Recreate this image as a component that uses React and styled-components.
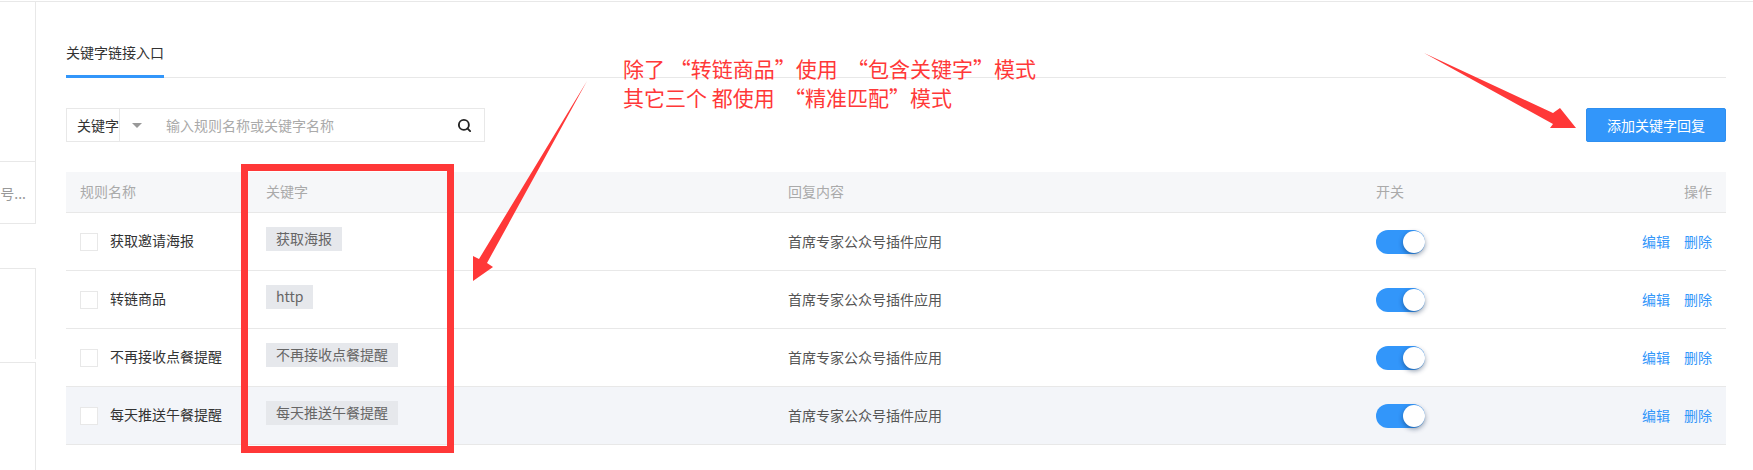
import React from "react";
import styled, { createGlobalStyle } from "styled-components";
import { Search } from "lucide-react";

const Global = createGlobalStyle`
  html, body { margin: 0; padding: 0; background: #fff; }
  body { font-family: "Noto Sans CJK SC", "Noto Sans", sans-serif; font-size: 14px; color: #333; }
  * { box-sizing: border-box; }
`;

const Page = styled.div`
  position: relative;
  width: 1753px;
  height: 470px;
  overflow: hidden;
  padding-top: 1px;
`;
const Frame = styled.div`
  display: flex;
  height: 469px;
  border-top: 1px solid #e8e8e8;
`;
const Sidebar = styled.aside`
  width: 36px;
  flex-shrink: 0;
  display: flex;
  flex-direction: column;
`;
const SideCard = styled.div`
  height: ${(p) => p.$h}px;
  margin-bottom: ${(p) => p.$gap || 0}px;
  border-right: 1px solid #e8e8e8;
  border-top: ${(p) => (p.$top ? "1px solid #e8e8e8" : "none")};
  border-bottom: ${(p) => (p.$bottom ? "1px solid #e8e8e8" : "none")};
  overflow: hidden;
  display: flex;
  align-items: center;
  justify-content: flex-end;
  padding-right: 9px;
  white-space: nowrap;
  color: #999;
  font-size: 14px;
`;
const Main = styled.main`
  flex: 1;
  min-width: 0;
  padding: 0 27px 0 30px;
`;
const TabBar = styled.div`
  display: flex;
  height: 76px;
  align-items: flex-end;
  border-bottom: 1px solid #e8e8e8;
`;
const Tab = styled.div`
  width: 98px;
  height: 36px;
  line-height: 20px;
  font-size: 14px;
  color: #333;
  white-space: nowrap;
  border-bottom: 3px solid #3296fa;
  margin-bottom: -1px;
`;
const Toolbar = styled.div`
  display: flex;
  justify-content: space-between;
  align-items: center;
  height: 34px;
  margin-top: 30px;
`;
const SearchBox = styled.div`
  width: 419px;
  height: 34px;
  border: 1px solid #e8e8e8;
  display: flex;
  align-items: center;
`;
const SelectLabel = styled.div`
  width: 53px;
  height: 100%;
  border-right: 1px solid #e8e8e8;
  padding-left: 10px;
  line-height: 32px;
  white-space: nowrap;
  color: #333;
`;
const Caret = styled.span`
  width: 0;
  height: 0;
  margin-left: 12px;
  border-left: 5px solid transparent;
  border-right: 5px solid transparent;
  border-top: 5px solid #999;
`;
const SearchInput = styled.input`
  flex: 1;
  min-width: 0;
  border: 0;
  outline: 0;
  margin-left: 24px;
  padding: 0;
  font: inherit;
  background: transparent;
  &::placeholder { color: #aaa; opacity: 1; }
`;
const SearchIcon = styled(Search)`
  margin-right: 12px;
  color: #222;
`;
const AddButton = styled.button`
  width: 140px;
  height: 34px;
  border: 1px solid #2f8ff0;
  border-radius: 2px;
  background: #3296fa;
  color: #fff;
  font: inherit;
  padding: 0;
`;
const Table = styled.div`
  margin-top: 30px;
`;
const Row = styled.div`
  display: grid;
  grid-template-columns: 200px 522px 588px 1fr;
  height: ${(p) => (p.$head ? 41 : 58)}px;
  padding-bottom: ${(p) => (p.$head ? 2 : 0)}px;
  align-items: center;
  border-bottom: 1px solid #e8e8e8;
  background: ${(p) => (p.$head ? "#f6f7f9" : p.$hover ? "#f3f5f9" : "#fff")};
  color: ${(p) => (p.$head ? "#aaa" : "#333")};
`;
const NameCell = styled.div`
  display: flex;
  align-items: center;
  padding-left: 14px;
  white-space: nowrap;
`;
const NameText = styled.span`
  padding-bottom: 4px;
`;
const Check = styled.span`
  width: 18px;
  height: 18px;
  margin: 1px 12px 0 0;
  border: 1px solid #e8e8e8;
  background: #fff;
  flex-shrink: 0;
`;
const KeyCell = styled.div`
  align-self: start;
  padding-top: ${(p) => (p.$head ? 0 : 14)}px;
  line-height: ${(p) => (p.$head ? "38px" : "normal")};
`;
const Tag = styled.span`
  display: inline-block;
  height: 24px;
  line-height: 22px;
  padding: 0 10px;
  background: #e6e8ec;
  color: #666;
  font-size: 14px;
  vertical-align: top;
`;
const ContentCell = styled.div`
  color: ${(p) => (p.$head ? "#aaa" : "#555")};
  padding-bottom: ${(p) => (p.$head ? 0 : 2)}px;
`;
const LastCell = styled.div`
  display: flex;
  justify-content: space-between;
  align-items: center;
  padding-right: 14px;
`;
const Switch = styled.span`
  position: relative;
  display: block;
  width: 49px;
  height: 24px;
  border-radius: 12px;
  background: #3296fa;
`;
const Knob = styled.span`
  position: absolute;
  right: 0;
  top: 1px;
  width: 22px;
  height: 22px;
  border-radius: 50%;
  background: #fff;
  box-shadow: 0 2px 5px rgba(0, 30, 70, 0.45);
`;
const Actions = styled.div`
  display: flex;
  gap: 14px;
  padding-bottom: 2px;
`;
const Action = styled.span`
  color: #3296fa;
`;
const RedBox = styled.div`
  position: absolute;
  left: 241px;
  top: 164px;
  width: 213px;
  height: 289px;
  border: 7px solid #ff3838;
  pointer-events: none;
`;
const Note = styled.div`
  position: absolute;
  left: 623px;
  top: 54px;
  color: #ff3838;
  font-size: 21px;
  line-height: 29px;
  white-space: pre;
`;
const Arrows = styled.svg`
  position: absolute;
  left: 0;
  top: 0;
  pointer-events: none;
`;

const rows = [
  { name: "获取邀请海报", key: "获取海报" },
  { name: "转链商品", key: "http" },
  { name: "不再接收点餐提醒", key: "不再接收点餐提醒" },
  { name: "每天推送午餐提醒", key: "每天推送午餐提醒", hover: true },
];

export default function App() {
  return (
    <Page>
      <Global />
      <Frame>
        <Sidebar>
          <SideCard $h={160} $bottom />
          <SideCard $h={62} $gap={44} $bottom>公众号...</SideCard>
          <SideCard $h={91} $gap={3} $top />
          <SideCard $h={108} $top />
        </Sidebar>
        <Main>
          <TabBar>
            <Tab>关键字链接入口</Tab>
          </TabBar>
          <Toolbar>
            <SearchBox>
              <SelectLabel>关键字</SelectLabel>
              <Caret />
              <SearchInput placeholder="输入规则名称或关键字名称" />
              <SearchIcon size={15} strokeWidth={3} />
            </SearchBox>
            <AddButton>添加关键字回复</AddButton>
          </Toolbar>
          <Table>
            <Row $head>
              <NameCell>规则名称</NameCell>
              <KeyCell $head>关键字</KeyCell>
              <ContentCell $head>回复内容</ContentCell>
              <LastCell>
                <span>开关</span>
                <span>操作</span>
              </LastCell>
            </Row>
            {rows.map((r) => (
              <Row key={r.name} $hover={r.hover}>
                <NameCell>
                  <Check />
                  <NameText>{r.name}</NameText>
                </NameCell>
                <KeyCell>
                  <Tag>{r.key}</Tag>
                </KeyCell>
                <ContentCell>首席专家公众号插件应用</ContentCell>
                <LastCell>
                  <Switch>
                    <Knob />
                  </Switch>
                  <Actions>
                    <Action>编辑</Action>
                    <Action>删除</Action>
                  </Actions>
                </LastCell>
              </Row>
            ))}
          </Table>
        </Main>
      </Frame>
      <RedBox />
      <Note>{"除了 “转链商品”使用  “包含关键字”模式\n其它三个 都使用  “精准匹配”模式"}</Note>
      <Arrows width="1753" height="470" viewBox="0 0 1753 470">
        <polygon fill="#ff3838" points="587,81 487,263 493,267 473,281 473,256 479,259" />
        <polygon fill="#ff3838" points="1424,53 1553,113 1560,108 1576,128 1550,128 1553,124" />
      </Arrows>
    </Page>
  );
}
